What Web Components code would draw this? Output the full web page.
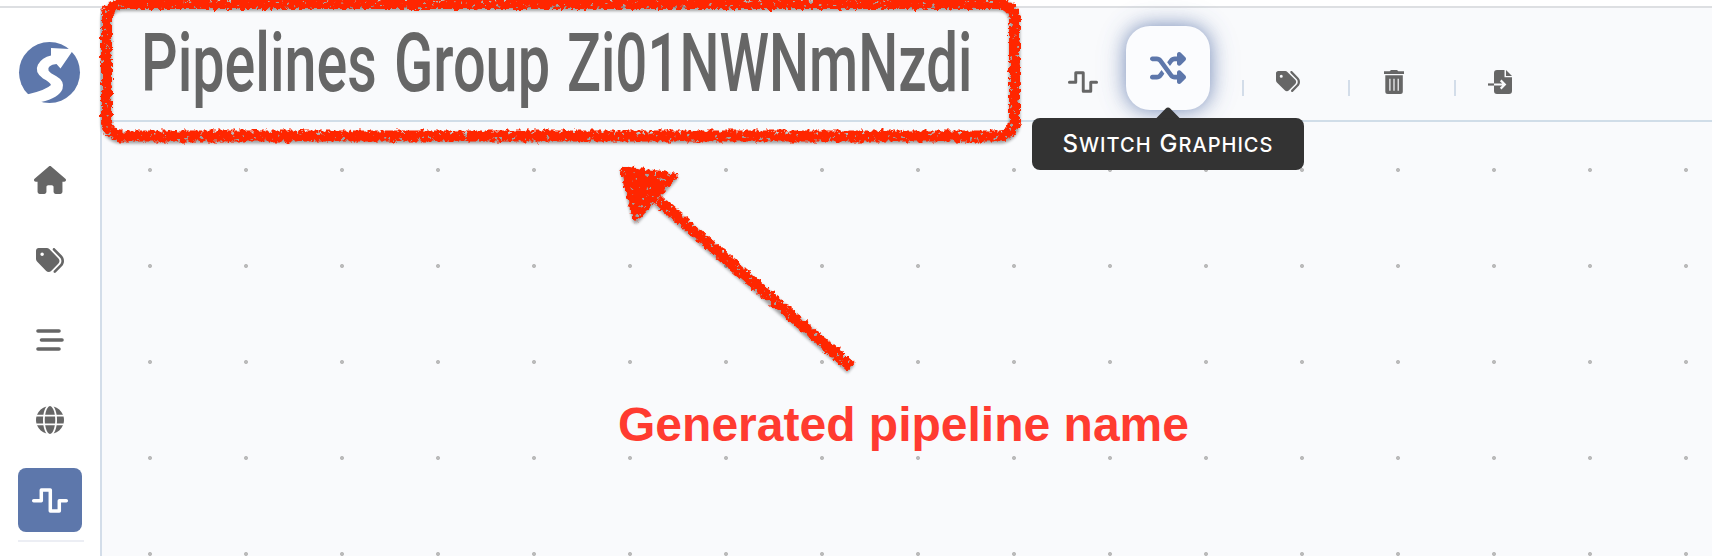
<!DOCTYPE html>
<html lang="en">
<head>
<meta charset="utf-8">
<title>Pipelines</title>
<style>
body{margin:0;background:#fff;font-family:Inter,"Liberation Sans",sans-serif;color:#666}
</style>
</head>
<body>
<pipeline-app></pipeline-app>
<script>
const ICONS = {
  home: ['0 0 576 512', '<path d="M575.8 255.5c0 18-15 32.1-32 32.1h-32l.7 160.2c0 2.7-.2 5.4-.5 8.1V472c0 22.1-17.9 40-40 40H392c-22.1 0-40-17.9-40-40V384c0-17.7-14.3-32-32-32H256c-17.7 0-32 14.3-32 32v88c0 22.1-17.9 40-40 40H104c-22.1 0-40-17.9-40-40V287.6H32c-18 0-32-14-32-32.1c0-9 3-17 10-24L266.4 8c7-7 15-8 22-8s15 2 21 7L564.8 231.5c8 7 12 15 11 24z"/>'],
  tags: ['0 32 512 448', '<path d="M345 39.1L472.8 168.4c52.4 53 52.4 138.2 0 191.2L360.8 472.9c-9.3 9.4-24.5 9.5-33.9 .2s-9.5-24.5-.2-33.9L438.6 325.9c33.9-34.3 33.9-89.4 0-123.7L310.9 72.9c-9.3-9.4-9.2-24.6 .2-33.9s24.6-9.2 33.9 .2zM0 229.5V80C0 53.5 21.5 32 48 32H197.5c17 0 33.3 6.7 45.3 18.7l168 168c25 25 25 65.5 0 90.5L277.3 442.7c-25 25-65.5 25-90.5 0l-168-168C6.7 262.7 0 246.5 0 229.5zM144 144a32 32 0 1 0 -64 0 32 32 0 1 0 64 0z"/>'],
  bars: ['0 0 28 22', '<path d="M2 2H23M5.5 11H26M2 20H23" fill="none" stroke="currentColor" stroke-width="3.6" stroke-linecap="round"/>'],
  globe: ['0 0 512 512', '<path d="M352 256c0 22.200-1.200 43.600-3.300 64H163.300c-2.200-20.400-3.300-41.800-3.300-64s1.200-43.600 3.300-64H348.700c2.200 20.400 3.300 41.800 3.300 64zm28.800-64H503.900c5.300 20.500 8.100 41.900 8.100 64s-2.800 43.500-8.100 64H380.800c2.100-20.600 3.200-42 3.200-64s-1.100-43.400-3.200-64zm112.600-32H376.700c-10-63.900-29.800-117.400-55.300-151.600c78.300 20.700 142 77.500 171.900 151.600zm-149.100 0H167.700c6.100-36.400 15.500-68.600 27-94.700c10.500-23.600 22.200-40.700 33.500-51.500C239.400 3.200 248.700 0 256 0s16.600 3.200 27.800 13.800c11.300 10.800 23 27.900 33.500 51.500c11.600 26 20.900 58.200 27 94.700zm-209 0H18.600C48.600 85.900 112.200 29.100 190.600 8.400C165.100 42.600 145.300 96.100 135.300 160zM8.100 192H131.200c-2.100 20.600-3.200 42-3.200 64s1.100 43.400 3.200 64H8.100C2.800 299.500 0 278.100 0 256s2.800-43.500 8.100-64zM194.700 446.600c-11.600-26-20.900-58.200-27-94.600H344.300c-6.100 36.400-15.500 68.600-27 94.600c-10.500 23.600-22.200 40.700-33.500 51.500C272.600 508.800 263.300 512 256 512s-16.600-3.200-27.800-13.800c-11.300-10.800-23-27.900-33.500-51.500zM135.300 352c10 63.900 29.800 117.400 55.300 151.600C112.200 482.900 48.600 426.100 18.600 352H135.300zm358.100 0c-30 74.100-93.600 130.900-171.900 151.600c25.500-34.200 45.200-87.700 55.300-151.600H493.400z"/>'],
  wave: ['0 0 36 25', '<path d="M1.700 12.700H9.300V2H18.300V23H27.300V12.700H34.300" fill="none" stroke="currentColor" stroke-width="3.500" stroke-linecap="round" stroke-linejoin="round"/>'],
  shuffle: ['0 32 512 448', '<path d="M403.800 34.400c12-5 25.700-2.200 34.900 6.900l64 64c6 6 9.400 14.100 9.400 22.600s-3.400 16.600-9.400 22.600l-64 64c-9.200 9.200-22.900 11.900-34.900 6.900s-19.800-16.600-19.800-29.600V160H352c-10.100 0-19.600 4.700-25.600 12.800L284 229.300 244 176l31.200-41.600C293.300 110.200 321.800 96 352 96h32V64c0-12.900 7.800-24.600 19.800-29.600zM164 282.700L204 336l-31.200 41.600C154.700 401.800 126.200 416 96 416H32c-17.700 0-32-14.300-32-32s14.300-32 32-32H96c10.100 0 19.600-4.700 25.600-12.800L164 282.700zm274.600 188c-9.200 9.200-22.900 11.900-34.900 6.900s-19.800-16.600-19.800-29.600V416H352c-30.200 0-58.700-14.200-76.800-38.400L121.600 172.800c-6-8.100-15.500-12.800-25.600-12.800H32c-17.700 0-32-14.300-32-32s14.300-32 32-32H96c30.200 0 58.700 14.200 76.800 38.400L326.400 339.200c6 8.100 15.500 12.800 25.600 12.800h32V320c0-12.900 7.800-24.600 19.800-29.600s25.700-2.200 34.900 6.900l64 64c6 6 9.400 14.100 9.400 22.600s-3.400 16.600-9.400 22.600l-64 64z"/>'],
  trash: ['0 0 20 24', '<path fill-rule="evenodd" d="M7 0H13L14.300 1.300H20V4H0V1.300H5.700ZM1.300 5.300H18.800V21.500Q18.800 24 16.300 24H3.800Q1.300 24 1.300 21.500ZM5.300 8.700V20.700H6.500V8.700ZM9.400 8.700V20.700H10.600V8.700ZM13.600 8.700V20.700H14.800V8.700Z"/>'],
  export: ['0 0 24 24', '<path d="M9 0H16.500V7.300H24V21Q24 24 21 24H9Q6 24 6 21V3Q6 0 9 0Z"/><path d="M18 0L24 6H18Z"/><path d="M0 14.500H6" stroke="currentColor" stroke-width="2.200"/><path d="M6 14.500H16.500M12.700 10.400L16.800 14.500L12.700 18.600" fill="none" stroke="#f9fafc" stroke-width="2.200"/>'],
  logo: ['0 0 61 61', '<circle cx="30.500" cy="30.500" r="30.500"/><path fill="#fff" d="M32 6L54.700 7.300L41.500 26.500L37.500 22Q28 23 29.500 28.500Q31 31 37 34Q46 39 43.500 47Q40 56 22 60L5 61L9 52.300Q27 48 32 43Q31 40 24 36.500Q15 30 19 22.500Q23 15.500 32 13.500Z"/>']
};

class Base extends HTMLElement {
  connectedCallback() {
    if (this.shadowRoot) return;
    this.attachShadow({ mode: 'open' }).innerHTML = this.render();
    if (this.ready) this.ready();
  }
}

customElements.define('ui-icon', class extends Base {
  render() {
    const [box, body] = ICONS[this.getAttribute('name')];
    return `<style>:host{display:block;flex:none}svg{display:block;width:100%;height:100%;fill:currentColor;overflow:visible}</style>
    <svg viewBox="${box}" preserveAspectRatio="none" aria-hidden="true">${body}</svg>`;
  }
});

customElements.define('side-item', class extends Base {
  render() {
    return `<style>:host{display:flex;align-items:center;justify-content:center;width:64px;height:64px;border-radius:8px;color:#666}
    :host([active]){background:#5d77ab;color:#fff}</style><slot></slot>`;
  }
});

customElements.define('side-bar', class extends Base {
  render() {
    return `<style>
    :host{display:flex;flex-direction:column;align-items:flex-start;width:82px;padding-left:18px;background:#fff;border-right:2px solid #d3dde9;overflow:hidden}
    .logo{width:61px;height:61px;margin:34px 0 37px 1px;color:#5d77ab}
    nav{display:flex;flex-direction:column;gap:16px;margin-top:8px}
    hr{width:66px;height:2px;border:0;margin:8px 0 0;background:#eceef4}
    </style>
    <ui-icon class="logo" name="logo"></ui-icon>
    <nav>
      <side-item><ui-icon name="home" style="width:32px;height:28px"></ui-icon></side-item>
      <side-item><ui-icon name="tags" style="width:28px;height:25px"></ui-icon></side-item>
      <side-item><ui-icon name="bars" style="width:28px;height:22px"></ui-icon></side-item>
      <side-item><ui-icon name="globe" style="width:28px;height:28px"></ui-icon></side-item>
      <side-item active><ui-icon name="wave" style="width:36px;height:25px"></ui-icon></side-item>
    </nav><hr>`;
  }
});

customElements.define('group-title', class extends Base {
  render() {
    return `<style>
    :host{display:flex;width:830px;height:112px;flex:none;padding-left:39px;box-sizing:border-box}
    h1{display:flex;gap:17px;margin:0;font:500 82px/96px Roboto,"Liberation Sans",sans-serif;color:#666;padding-top:7px}
    span{display:block;white-space:nowrap;flex:none}
    b{display:inline-block;font-weight:inherit;transform-origin:0 0}
    </style>
    <h1><span style="width:236px"><b>Pipelines</b></span><span style="width:156px"><b>Group</b></span><span style="width:405px"><b>Zi01NWNmNzdi</b></span></h1>`;
  }
  // Condense each word to the width of its cell.
  ready() {
    for (const b of this.shadowRoot.querySelectorAll('b'))
      b.style.transform = `scaleX(${parseFloat(b.parentElement.style.width) / b.offsetWidth})`;
  }
});

customElements.define('tool-tip', class extends Base {
  render() {
    return `<style>
    :host{position:absolute;left:50%;top:92px;transform:translateX(-50%);display:flex;align-items:center;justify-content:center;width:272px;height:52px;border-radius:8px;background:#333;color:#fff;font:500 20px/52px Inter,sans-serif;text-transform:uppercase;letter-spacing:1px;white-space:nowrap;z-index:2}
    svg{position:absolute;left:124px;top:-11px}
    div::first-letter{font-size:24px}
    p{margin:0;display:flex;gap:8px}
    </style><svg width="24" height="12"><path d="M0 11.500L9.500 1.800Q12-.8 14.500 1.800L24 11.500Z" fill="#333"/></svg><p><slot></slot></p>`;
  }
  ready() {
    const words = this.textContent.split(' ');
    this.shadowRoot.querySelector('p').innerHTML = words.map(w => `<div>${w}</div>`).join('');
  }
});

customElements.define('tool-bar', class extends Base {
  render() {
    return `<style>
    :host{display:flex;align-items:flex-start;flex:1;color:#666}
    ui-icon{margin-top:62px}
    i{flex:none;width:2px;height:16px;margin-top:72px;background:#d3dde9}
    .hot{position:relative;flex:none;display:flex;justify-content:center;width:84px;height:84px;margin:18px 32px 0 28px;border-radius:24px;background:#fbfcfe;box-shadow:0 0 20px rgba(93,119,171,.8),0 0 36px rgba(93,119,171,.12);color:#5d77ab}
    .hot ui-icon{margin-top:26px}
    </style>
    <ui-icon name="wave" style="width:30px;height:22px;margin:63px 0 0 136px"></ui-icon>
    <div class="hot"><ui-icon name="shuffle" style="width:36px;height:32px"></ui-icon><tool-tip>Switch Graphics</tool-tip></div>
    <i></i>
    <ui-icon name="tags" style="width:24px;height:21px;margin:63px 48px 0 32px"></ui-icon><i></i>
    <ui-icon name="trash" style="width:20px;height:24px;margin-left:34px;margin-right:50px"></ui-icon><i></i>
    <ui-icon name="export" style="width:24px;height:24px;margin-left:32px"></ui-icon>`;
  }
});

customElements.define('canvas-note', class extends Base {
  render() {
    return `<style>
    :host{position:absolute;inset:0;pointer-events:none;z-index:1}
    svg{display:block}
    text{font:bold 48px "Liberation Sans",Arial,sans-serif;fill:#ff3b30}
    </style>
    <svg width="1712" height="556">
      <defs><filter id="brush" filterUnits="userSpaceOnUse" x="0" y="-20" width="1200" height="500" color-interpolation-filters="sRGB">
        <feTurbulence type="fractalNoise" baseFrequency=".22" numOctaves="3" seed="8" result="n"/>
        <feDisplacementMap in="SourceGraphic" in2="n" scale="8" xChannelSelector="R" yChannelSelector="G" result="d"/>
        <feColorMatrix in="n" type="matrix" values="0 0 0 0 0  0 0 0 0 0  0 0 0 0 0  0 0 -14 0 10.400" result="holes"/>
        <feComposite in="d" in2="holes" operator="in" result="ink"/>
        <feGaussianBlur in="SourceAlpha" stdDeviation="1.700"/>
        <feOffset dy="2"/>
        <feComponentTransfer result="sh"><feFuncA type="linear" slope=".36"/></feComponentTransfer>
        <feMerge><feMergeNode in="sh"/><feMergeNode in="ink"/></feMerge>
      </filter></defs>
      <g filter="url(#brush)" stroke="#ff2600" fill="none">
        <rect x="106.500" y="3.500" width="908" height="132.500" rx="15" stroke-width="11"/>
        <path d="M658 200L851 367" stroke-width="11"/>
        <path d="M624 170L674 176L636 218Z" fill="#ff2600" stroke-width="7" stroke-linejoin="round"/>
      </g>
      <text x="618" y="441" textLength="571" lengthAdjust="spacingAndGlyphs">Generated pipeline name</text>
    </svg>`;
  }
});

customElements.define('pipeline-app', class extends Base {
  render() {
    return `<style>
    :host{display:flex;flex-direction:column;position:relative;width:1712px;height:556px;overflow:hidden;background:#fff}
    .top{height:6px;flex:none;border-bottom:2px solid #dddfe2}
    .body{display:flex;flex:1;min-height:0}
    side-bar{flex:none}
    main{flex:1;display:flex;flex-direction:column;min-width:0;background:#f9fafc}
    header{display:flex;height:112px;flex:none;border-bottom:2px solid #d0dde8}
    .grid{flex:1;background:radial-gradient(circle at 48px 48px,#bbb 1.700px,transparent 2.300px) 0 0/96px 96px}
    </style>
    <div class="top"></div>
    <div class="body"><side-bar></side-bar>
      <main><header><group-title></group-title><tool-bar></tool-bar></header><div class="grid"></div></main>
    </div>
    <canvas-note></canvas-note>`;
  }
});
</script>
</body>
</html>
